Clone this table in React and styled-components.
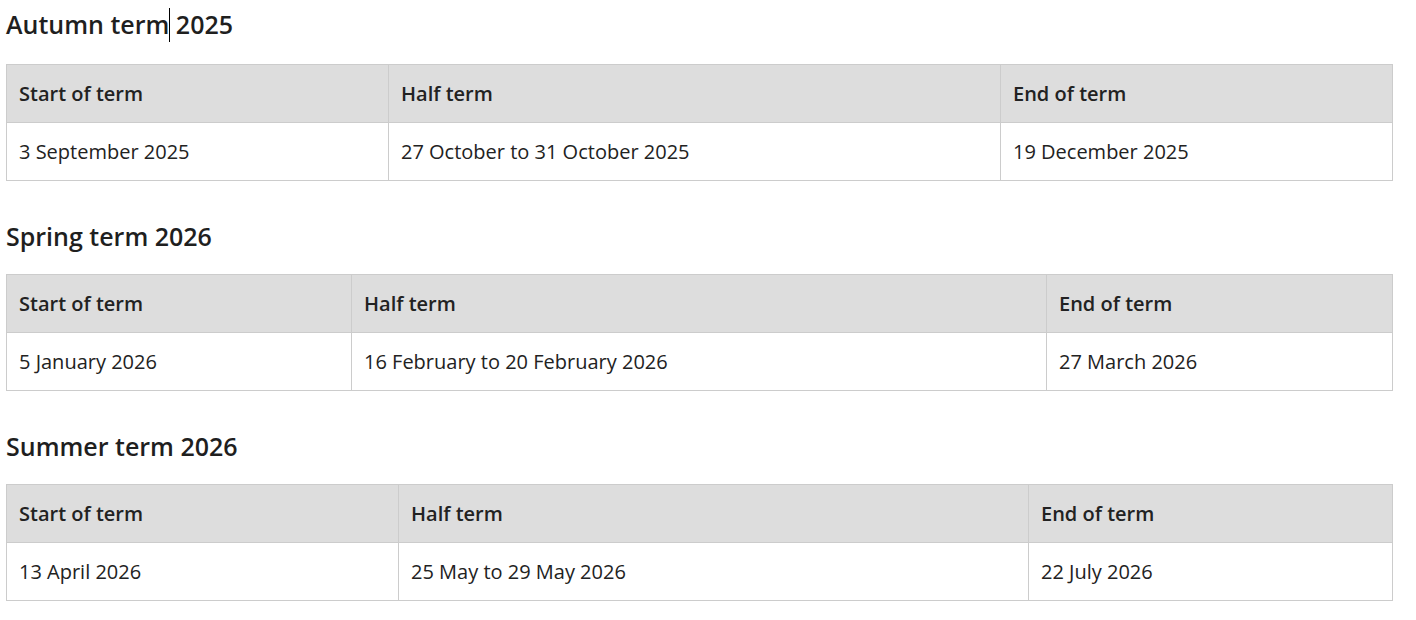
import React from 'react';
import styled, { createGlobalStyle } from 'styled-components';

const GlobalStyle = createGlobalStyle`
  body {
    margin: 0;
    background: #fff;
    font-family: "Open Sans", "Noto Sans", sans-serif;
    color: #212121;
  }
`;

const Page = styled.div`
  width: 1387px;
  padding: 8px 0 0 6px;
`;

const Heading = styled.h2`
  margin: 0 0 22px;
  font-size: 25px;
  line-height: 32px;
  font-weight: 600;
  color: #1f1f1f;
`;

const Caret = styled.span`
  display: inline-block;
  width: 1px;
  height: 34px;
  margin-right: -1px;
  background: #000;
  vertical-align: -8px;
`;

const Table = styled.table`
  width: 1387px;
  table-layout: fixed;
  border-collapse: collapse;
  margin-bottom: 39px;
  font-size: 20px;
`;

const Cell = styled.td`
  height: 57px;
  padding: 0 12px;
  border: 1px solid #cccccc;
  text-align: left;
  vertical-align: middle;
  font-weight: 400;
  color: #222;
  white-space: nowrap;
`;

const HeadCell = styled(Cell).attrs({ as: 'th' })`
  background: #dddddd;
  font-weight: 600;
`;

const terms = [
  {
    title: 'Autumn term 2025',
    caret: true,
    cols: [382, 612, 392],
    dates: ['3 September 2025', '27 October to 31 October 2025', '19 December 2025'],
  },
  {
    title: 'Spring term 2026',
    cols: [345, 695, 346],
    dates: ['5 January 2026', '16 February to 20 February 2026', '27 March 2026'],
  },
  {
    title: 'Summer term 2026',
    cols: [392, 630, 364],
    dates: ['13 April 2026', '25 May to 29 May 2026', '22 July 2026'],
  },
];

const TermTable = ({ title, caret, cols, dates }) => (
  <section>
    <Heading>
      {caret ? (
        <>
          Autumn term<Caret /> 2025
        </>
      ) : (
        title
      )}
    </Heading>
    <Table>
      <colgroup>
        {cols.map((w, i) => (
          <col key={i} style={{ width: w }} />
        ))}
      </colgroup>
      <thead>
        <tr>
          <HeadCell>Start of term</HeadCell>
          <HeadCell>Half term</HeadCell>
          <HeadCell>End of term</HeadCell>
        </tr>
      </thead>
      <tbody>
        <tr>
          {dates.map((d) => (
            <Cell key={d}>{d}</Cell>
          ))}
        </tr>
      </tbody>
    </Table>
  </section>
);

const App = () => (
  <>
    <GlobalStyle />
    <Page>
      {terms.map((t) => (
        <TermTable key={t.title} {...t} />
      ))}
    </Page>
  </>
);

export default App;
